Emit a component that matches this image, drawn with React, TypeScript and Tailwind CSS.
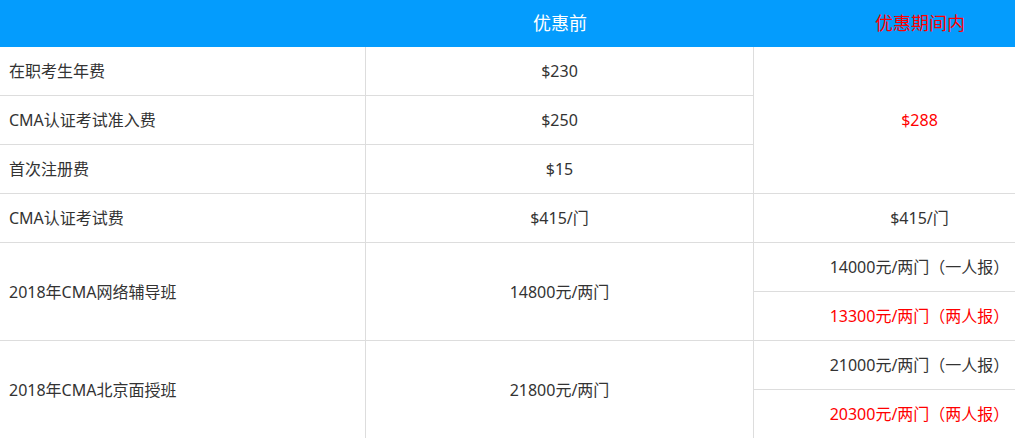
import React from "react";

const cell = "border-b border-r border-[#dddddd] flex items-center";

export default function App() {
  return (
    <div
      className="w-[1015px] h-[438px] overflow-hidden bg-white text-[#333333] text-[16px] [text-spacing-trim:space-all]"
      style={{ fontFamily: '"Noto Sans", "Noto Sans CJK SC", sans-serif' }}
    >
      <div className="w-[1086px] grid grid-cols-[366px_388px_332px] grid-rows-[47px_repeat(8,49px)]">
        {/* header */}
        <div className="bg-[#049cfd]" />
        <div className="bg-[#049cfd] flex items-center justify-center text-white text-[18px]">优惠前</div>
        <div className="bg-[#049cfd] flex items-center justify-center text-[#ff0000] text-[18px]">优惠期间内</div>

        {/* row 1 */}
        <div className={`${cell} pl-[9px]`}>在职考生年费</div>
        <div className={`${cell} justify-center`}>$230</div>
        <div className={`${cell} justify-center row-span-3 text-[#ff0000]`}>$288</div>

        {/* row 2 */}
        <div className={`${cell} pl-[9px]`}>CMA认证考试准入费</div>
        <div className={`${cell} justify-center`}>$250</div>

        {/* row 3 */}
        <div className={`${cell} pl-[9px]`}>首次注册费</div>
        <div className={`${cell} justify-center`}>$15</div>

        {/* row 4 */}
        <div className={`${cell} pl-[9px]`}>CMA认证考试费</div>
        <div className={`${cell} justify-center`}>$415/门</div>
        <div className={`${cell} justify-center`}>$415/门</div>

        {/* row 5-6 */}
        <div className={`${cell} pl-[9px] row-span-2`}>2018年CMA网络辅导班</div>
        <div className={`${cell} justify-center row-span-2`}>14800元/两门</div>
        <div className={`${cell} justify-center`}>14000元/两门（一人报）</div>
        <div className={`${cell} justify-center text-[#ff0000]`}>13300元/两门（两人报）</div>

        {/* row 7-8 */}
        <div className={`${cell} pl-[9px] row-span-2`}>2018年CMA北京面授班</div>
        <div className={`${cell} justify-center row-span-2`}>21800元/两门</div>
        <div className={`${cell} justify-center`}>21000元/两门（一人报）</div>
        <div className={`${cell} justify-center text-[#ff0000]`}>20300元/两门（两人报）</div>
      </div>
    </div>
  );
}
